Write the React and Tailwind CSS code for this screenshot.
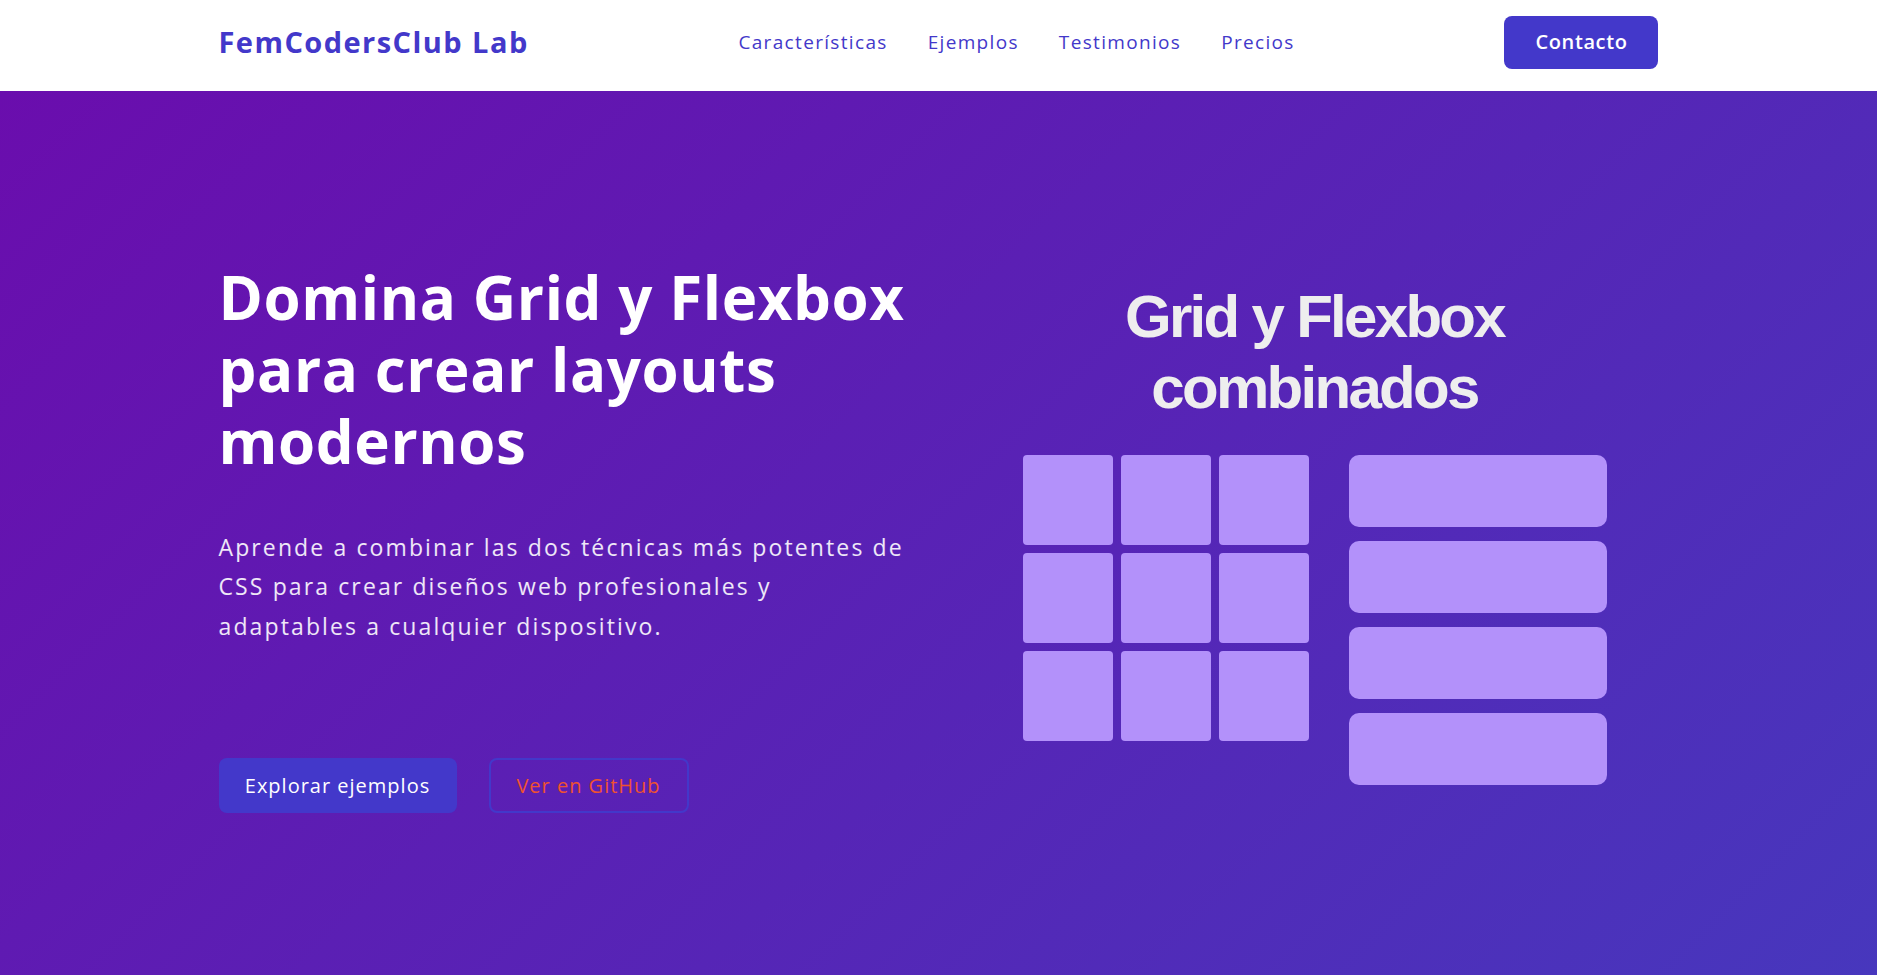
const navLinks = ["Características", "Ejemplos", "Testimonios", "Precios"];

function LayoutArt() {
  return (
    <div className="flex flex-col items-center">
      <h2 className="text-center font-['Liberation_Sans',Arial,sans-serif] text-[60px] font-bold leading-[71px] tracking-[-0.045em] text-[#eeeeee]">
        Grid y Flexbox
        <br />
        combinados
      </h2>
      <div className="mt-[32px] flex items-start gap-10">
        <div className="grid w-[286px] grid-cols-3 gap-2">
          {Array.from({ length: 9 }).map((_, i) => (
            <div key={i} className="h-[90px] rounded bg-[#b391fa]" />
          ))}
        </div>
        <div className="flex w-[258px] flex-col gap-[14px]">
          {Array.from({ length: 4 }).map((_, i) => (
            <div key={i} className="h-[72px] rounded-[10px] bg-[#b391fa]" />
          ))}
        </div>
      </div>
    </div>
  );
}

export default function App() {
  return (
    <div className="min-h-screen bg-white font-['Open_Sans',sans-serif]">
      <header className="h-[91px] bg-white">
        <nav className="mx-auto flex h-full w-[1440px] items-center justify-between pb-[7px]">
          <a href="#" className="text-[29px] font-bold tracking-[0.05em] text-[#4338ca]">
            FemCodersClub Lab
          </a>
          <ul className="flex gap-10 text-[19px] tracking-[0.07em] text-[#4338ca]">
            {navLinks.map((link) => (
              <li key={link}>
                <a href="#">{link}</a>
              </li>
            ))}
          </ul>
          <a
            href="#"
            className="flex h-[53px] w-[154px] items-center justify-center rounded-lg bg-[#4338ca] text-[20px] font-semibold tracking-[0.03em] text-white"
          >
            Contacto
          </a>
        </nav>
      </header>

      <section className="flex h-[884px] items-center bg-[linear-gradient(135deg,#6a0dad_0%,#4737bd_100%)]">
        <div className="mx-auto grid w-[1440px] grid-cols-2 items-center gap-16">
          <div className="pt-2">
            <h1 className="text-[60px] font-bold leading-[72px] tracking-[0.01em] text-white">
              Domina Grid y Flexbox para crear layouts modernos
            </h1>
            <p className="mt-[51px] whitespace-nowrap text-[23px] leading-[39.6px] tracking-[0.092em] text-white/90">
              Aprende a combinar las dos técnicas más potentes de
              <br />
              CSS para crear diseños web profesionales y
              <br />
              adaptables a cualquier dispositivo.
            </p>
            <div className="mt-[112px] flex gap-8">
              <a
                href="#"
                className="flex h-[55px] w-[238px] items-center justify-center rounded-lg bg-[#4338ca] text-[20px] font-medium tracking-[0.05em] text-white"
              >
                Explorar ejemplos
              </a>
              <a
                href="#"
                className="flex h-[55px] w-[200px] items-center justify-center rounded-lg border-2 border-[#4338ca] text-[20px] font-medium tracking-[0.05em] text-[#f0522f]"
              >
                Ver en GitHub
              </a>
            </div>
          </div>
          <LayoutArt />
        </div>
      </section>
    </div>
  );
}
